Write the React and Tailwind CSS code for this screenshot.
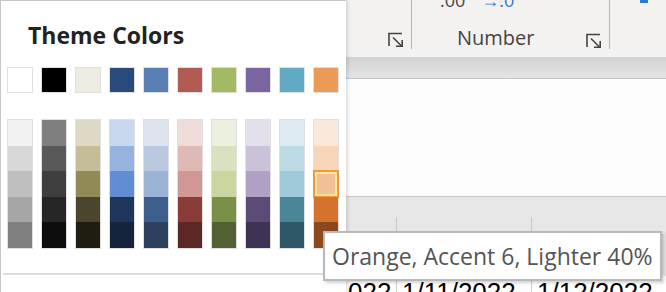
import React from "react";

// top row of theme colours
const base = ["#ffffff", "#000000", "#eeece1", "#2a4a7b", "#5a7fb5", "#b15a51", "#a4b965", "#7b659e", "#62a9c4", "#ec9a58"];

// lighter / darker shades, one column per theme colour
const shades = [
  ["#f2f2f2", "#d8d8d8", "#bfbfbf", "#a5a5a5", "#808080"],
  ["#7f7f7f", "#595959", "#3f3f3f", "#262626", "#0d0d0d"],
  ["#ddd9c4", "#c4bd97", "#918a57", "#4a452c", "#1e1c13"],
  ["#c8d9ef", "#95b3df", "#608dd2", "#1e365c", "#15233d"],
  ["#dde3ef", "#bac9e0", "#9ab2d4", "#3e5f8d", "#2c4060"],
  ["#eedbda", "#dfb9b6", "#d09894", "#8a3c38", "#5c2826"],
  ["#ecf0df", "#d9e2c0", "#c9d69f", "#7a9046", "#526033"],
  ["#e3e0ec", "#c9c2d8", "#b0a0c4", "#5d4b77", "#3e3352"],
  ["#dceaf0", "#bcdbe5", "#9ecad9", "#4a8598", "#2f5866"],
  ["#fae9db", "#f6d5b8", "#f0c196", "#d4722e", "#8c4a1c"],
];

const Launcher = () => (
  <svg width="16" height="16" viewBox="0 0 16 16" fill="none" stroke="#444" strokeWidth="1.6">
    <path d="M1 14V1.5H14" />
    <path d="M5 5.5L13.5 14" />
    <path d="M8 14.2H14.2V8" />
  </svg>
);

const App = () => {
  return (
    <div className="relative w-[666px] h-[292px] overflow-hidden bg-[#fdfdfd]" style={{ fontFamily: "'Open Sans', 'Noto Sans', sans-serif" }}>
      {/* ribbon */}
      <div className="h-[57px] bg-[#f3f2f1] flex pl-[346px]">
        <div className="w-[65px] flex items-end justify-end pb-[9px] pr-[7px]">
          <Launcher />
        </div>
        <div className="w-px h-[49px] bg-[#b5b5b5]" />
        <div className="w-[197px] relative">
          <div className="absolute top-[-13px] left-[28px] text-[18px] text-[#444] flex gap-[16px]">
            <span>.00</span>
            <span className="text-[#2b7bd0]">→.0</span>
          </div>
          <div className="absolute left-[45px] top-[25px] text-[20px] text-[#444] leading-[26px]">Number</div>
          <div className="absolute right-[7px] top-[33px]">
            <Launcher />
          </div>
        </div>
        <div className="w-px h-[49px] bg-[#b5b5b5]" />
        <div className="relative flex-1">
          <div className="absolute left-[30px] top-0 w-[8px] h-[3px] bg-[#2b7bd0]" />
        </div>
      </div>
      {/* shadow strip under ribbon */}
      <div className="h-[22px] bg-gradient-to-b from-[#d2d2d2] to-[#e4e4e4] border-b border-[#c4c4c4]" />
      {/* formula / blank area */}
      <div className="h-[118px] bg-[#fdfdfd] border-b border-[#c8c8c8]" />
      {/* grey header band */}
      <div className="h-[79px] bg-[#e6e6e6] flex pl-[345px]">
        <div className="w-[52px] mt-[20px] border-r border-[#c8c8c8]" />
        <div className="w-[135px] mt-[20px] border-r border-[#c8c8c8]" />
      </div>
      {/* cell row */}
      <div className="h-[20px] bg-white flex pl-[345px] text-[26px] text-black leading-[32px]" style={{ fontFamily: "'Liberation Sans', sans-serif" }}>
        <div className="w-[52px] border-l border-r border-[#d0d0d0] overflow-hidden pl-[2px]">022</div>
        <div className="w-[135px] border-r border-[#d0d0d0] overflow-hidden pl-[5px]">1/11/2022</div>
        <div className="flex-1 overflow-hidden pl-[5px]">1/12/2022</div>
      </div>

      {/* theme colours dropdown */}
      <div className="absolute left-0 top-0 w-[346px] h-[292px] bg-white border-l border-t border-[#c6c6c6] shadow-[2px_0_3px_rgba(0,0,0,0.12)]">
        <div className="pl-[27px] pt-[19px] h-[66px] text-[23px] font-bold text-[#222] leading-[30px]">Theme Colors</div>
        <div className="flex gap-[8px] pl-[6px]">
          {base.map((c) => (
            <div key={c} className="w-[26px] h-[26px] border border-[#e0e0e0]" style={{ backgroundColor: c }} />
          ))}
        </div>
        <div className="flex gap-[8px] pl-[6px] mt-[26px]">
          {shades.map((col, ci) => (
            <div key={ci} className="w-[26px] h-[130px] border border-[#e0e0e0] flex flex-col">
              {col.map((c, ri) => (
                <div key={ri} className="relative flex-1" style={{ backgroundColor: c }}>
                  {ci === 9 && ri === 2 && (
                    <div className="absolute -left-px -right-px -top-px -bottom-px border-2 border-[#ef9a3f]">
                      <div className="w-full h-full border-2 border-[#fde49c]" />
                    </div>
                  )}
                </div>
              ))}
            </div>
          ))}
        </div>
        <div className="mt-[24px] ml-[2px] h-[2px] bg-[#dcdcdc]" />
      </div>

      {/* tooltip */}
      <div className="absolute left-[323px] top-[231px] w-[339px] h-[50px] bg-white border-2 border-[#b8b8b8] shadow-[2px_2px_3px_rgba(0,0,0,0.18)] flex items-center pl-[7px] text-[23px] text-[#555]" style={{ fontFamily: "'Open Sans', 'Noto Sans', sans-serif" }}>
        Orange, Accent 6, Lighter 40%
      </div>
    </div>
  );
};

export default App;
